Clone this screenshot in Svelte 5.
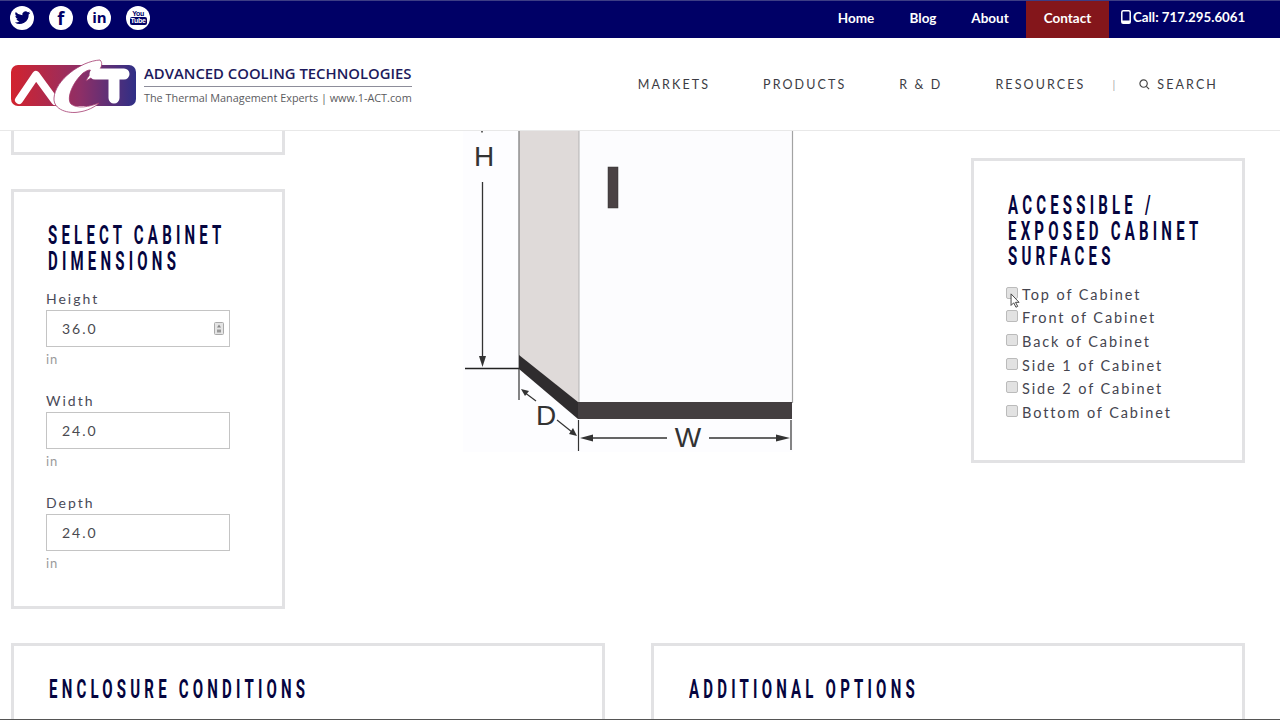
<script>
  const social = ['twitter', 'facebook', 'linkedin', 'youtube'];
  const topLinks = ['Home', 'Blog', 'About'];
  const mainLinks = ['MARKETS', 'PRODUCTS', 'R & D', 'RESOURCES'];
  const dimensions = [
    { label: 'Height', value: '36.0', spinner: true },
    { label: 'Width', value: '24.0' },
    { label: 'Depth', value: '24.0' }
  ];
  const surfaces = ['Top', 'Front', 'Back', 'Side 1', 'Side 2', 'Bottom'];
</script>

<div class="page">
  <div class="topbar">
    <div class="social">
      {#each social as name}
        <span class="round">
          {#if name === 'twitter'}
            <svg viewBox="0 0 24 24" width="17" height="17"><path fill="#000066" d="M23 5.400c-.8.4-1.700.6-2.600.7.900-.6 1.600-1.400 2-2.500-.9.500-1.800.9-2.900 1.100A4.500 4.500 0 0 0 11.800 8.800 12.800 12.800 0 0 1 2.500 4.100a4.500 4.500 0 0 0 1.400 6c-.7 0-1.400-.2-2-.6 0 2.200 1.500 4.100 3.600 4.500-.7.200-1.400.2-2 .1.600 1.800 2.300 3.100 4.200 3.100A9 9 0 0 1 1 19.100 12.800 12.800 0 0 0 20.700 7.700c.9-.6 1.700-1.400 2.300-2.300z"/></svg>
          {:else if name === 'facebook'}
            <span class="glyph fb">f</span>
          {:else if name === 'linkedin'}
            <span class="glyph in">in</span>
          {:else}
            <span class="yt"><span class="you">You</span><span class="tube">Tube</span></span>
          {/if}
        </span>
      {/each}
    </div>
    <nav class="toplinks">
      {#each topLinks as link}
        <span class="toplink">{link}</span>
      {/each}
      <span class="toplink contact">Contact</span>
      <span class="call">
        <svg viewBox="0 0 10 14" width="10" height="14"><rect x="0.800" y="0.800" width="8.400" height="12.400" rx="1.500" fill="none" stroke="#fff" stroke-width="1.500"/><rect x="0.800" y="10.500" width="8.400" height="2.700" fill="#fff"/></svg>
        Call: 717.295.6061
      </span>
    </nav>
  </div>

  <header class="header">
    <div class="logo">
      <svg class="mark" viewBox="0 0 126 56" width="126" height="56">
        <defs>
          <linearGradient id="act" x1="0" x2="1" y1="0" y2="0">
            <stop offset="0" stop-color="#d2232e"/>
            <stop offset="0.55" stop-color="#8f2f66"/>
            <stop offset="1" stop-color="#2f2f86"/>
          </linearGradient>
        </defs>
        <rect y="7" width="125" height="41" rx="7" fill="url(#act)"/>
        <path d="M8 42 L25 17 L44 43" fill="none" stroke="#fff" stroke-width="8" stroke-linecap="round" stroke-linejoin="round"/>
        <path d="M89 2 C70 3 44 22 43 40 C42 52 58 56 68 54 C76 53 84 49 88 45 C78 49 66 51 60 46 C55 40 62 24 72 15 C78 11 81 11 80 15 C78 18 76 20 75 23 C84 18 95 8 89 2 Z" fill="#fff" stroke="#a33a6e" stroke-width="0.800"/>
        <path d="M84 16 H113 M103 16 V40" fill="none" stroke="#fff" stroke-width="11" stroke-linecap="round"/>
      </svg>
      <div class="wordmark">
        <div class="company">ADVANCED COOLING TECHNOLOGIES</div>
        <div class="tagline">The Thermal Management Experts | www.1-ACT.com</div>
      </div>
    </div>
    <nav class="mainlinks">
      {#each mainLinks as link}
        <span>{link}</span>
      {/each}
      <span class="pipe">|</span>
      <span class="search">
        <svg viewBox="0 0 12 12" width="11" height="11"><circle cx="5" cy="5" r="4" fill="none" stroke="#444" stroke-width="1.300"/><path d="M8 8 L11 11" stroke="#444" stroke-width="1.300"/></svg>
        SEARCH
      </span>
    </nav>
  </header>

  <main class="main">
    <div class="upper">
      <div class="leftcol">
        <div class="card stub"></div>
        <section class="card dims">
          <h2><span>SELECT CABINET<br />DIMENSIONS</span></h2>
          {#each dimensions as d}
            <div class="field">
              <label for={d.label}>{d.label}</label>
              <div class="inputwrap">
                <input id={d.label} type="text" value={d.value} readonly />
                {#if d.spinner}
                  <svg class="spinner" viewBox="0 0 10 13" width="10" height="13">
                    <rect x="0.500" y="0.500" width="9" height="12" rx="1" fill="#e4e4e4" stroke="#aaa"/>
                    <polygon points="5,2.500 7,5.500 3,5.500" fill="#888"/>
                    <rect x="3" y="7.500" width="4" height="3" fill="#999"/>
                  </svg>
                {/if}
              </div>
              <div class="unit">in</div>
            </div>
          {/each}
        </section>
      </div>

      <div class="figure">
        <svg viewBox="448 131 360 340" width="360" height="340">
          <rect x="463" y="130" width="330" height="322" fill="#fdfdff"/>
          <polygon points="519,130 579,130 579,403 519,356" fill="#dfdad9"/>
          <rect x="579" y="130" width="213" height="273" fill="#fcfcfe"/>
          <path d="M579 130V403" stroke="#b3b3b3" stroke-width="1"/>
          <path d="M792.500 130V403" stroke="#a3a3a3" stroke-width="1.200"/>
          <path d="M519 130V368" stroke="#777" stroke-width="1.200"/>
          <rect x="608" y="167" width="10" height="41" fill="#4a4244" stroke="#333" stroke-width="0.500"/>
          <rect x="578" y="402" width="214" height="17" fill="#433e40"/>
          <polygon points="519,355 578,402 578,419 519,369" fill="#2f2c2e"/>

          <path d="M482 131v1.500" stroke="#333" stroke-width="1.500"/>
          <text x="484" y="166" class="dim">H</text>
          <path d="M482.500 182V362" stroke="#333" stroke-width="1.300"/>
          <polygon points="479,356 486,356 482.500,367" fill="#333"/>
          <path d="M465 368.500H519" stroke="#222" stroke-width="1.300"/>
          <path d="M519 368V400" stroke="#333" stroke-width="1.200"/>

          <path d="M524 392L536 401" stroke="#333" stroke-width="1.200"/>
          <polygon points="521,389 529,391 525,396" fill="#333"/>
          <text x="546" y="425" class="dim">D</text>
          <path d="M557 420L572 432" stroke="#333" stroke-width="1.200"/>
          <polygon points="577,436 569,434 573,428" fill="#333"/>

          <path d="M578.500 420V451" stroke="#333" stroke-width="1.200"/>
          <path d="M791 420V450" stroke="#333" stroke-width="1.200"/>
          <path d="M586 438H667M709 438H784" stroke="#333" stroke-width="1.300"/>
          <polygon points="580,438 593,434.500 593,441.500" fill="#333"/>
          <polygon points="790,438 776,434.500 776,441.500" fill="#333"/>
          <text x="688" y="447" class="dim">W</text>
        </svg>
      </div>

      <div class="rightcol">
        <section class="card surfaces">
          <h2><span>ACCESSIBLE /<br />EXPOSED CABINET<br />SURFACES</span></h2>
          <ul>
            {#each surfaces as s, i}
              <li>
                <input id={'s' + i} type="checkbox" />
                <label for={'s' + i}>{s} of Cabinet</label>
                {#if i === 0}
                  <svg class="cursor" viewBox="0 0 12 18" width="11" height="16"><path d="M1 1V14L4 11L6.500 16L8.500 15L6 10.500H10Z" fill="#fff" stroke="#333" stroke-width="1"/></svg>
                {/if}
              </li>
            {/each}
          </ul>
        </section>
      </div>
    </div>

    <div class="lower">
      <section class="card wide"><h2><span>ENCLOSURE CONDITIONS</span></h2></section>
      <section class="card wide"><h2><span>ADDITIONAL OPTIONS</span></h2></section>
    </div>
  </main>
</div>

<style>
  :global(body) {
    background: #fff;
  }

  .page {
    width: 1280px;
    height: 720px;
    overflow: hidden;
    font-family: Lato, "Liberation Sans", sans-serif;
    display: flex;
    flex-direction: column;
    border-bottom: 1px solid #555;
    box-sizing: border-box;
  }

  .topbar {
    height: 38px;
    flex: none;
    background: #000066;
    border-top: 1px solid #3d3d85;
    box-sizing: border-box;
    display: flex;
    justify-content: space-between;
    padding: 0 35px 0 10px;
  }

  .social {
    display: flex;
    gap: 14.700px;
    align-items: center;
    margin-top: -4px;
  }

  .round {
    width: 24px;
    height: 24px;
    border-radius: 50%;
    background: #fff;
    display: flex;
    align-items: center;
    justify-content: center;
    color: #000066;
    overflow: hidden;
  }

  .glyph {
    font-family: "Open Sans", sans-serif;
    font-weight: 700;
    line-height: 1;
  }

  .fb {
    font-size: 18px;
  }

  .in {
    font-size: 15px;
  }

  .yt {
    display: flex;
    flex-direction: column;
    align-items: center;
    font-family: "Liberation Sans", sans-serif;
    font-weight: 700;
  }

  .you {
    font-size: 7px;
    line-height: 7px;
    letter-spacing: -0.300px;
  }

  .tube {
    font-size: 7px;
    line-height: 8px;
    background: #000066;
    color: #fff;
    border-radius: 2px;
    padding: 0 1px;
    letter-spacing: -0.300px;
  }

  .toplinks {
    display: flex;
    align-items: center;
    color: #fff;
    font-size: 13.500px;
    font-weight: 700;
  }

  .toplink {
    width: 67px;
    text-align: center;
    padding-bottom: 3px;
  }

  .contact {
    width: 83px;
    height: 100%;
    margin-left: 2.500px;
    box-sizing: border-box;
    background: #84161b;
    display: flex;
    align-items: center;
    justify-content: center;
  }

  .call {
    width: 124px;
    margin-left: 12px;
    display: flex;
    align-items: center;
    gap: 2px;
    white-space: nowrap;
    padding-bottom: 5px;
    font-size: 13.300px;
  }

  .call svg {
    flex: none;
  }

  .header {
    height: 93px;
    flex: none;
    box-sizing: border-box;
    border-bottom: 1px solid #e8e8e8;
    display: flex;
    justify-content: space-between;
    align-items: center;
    padding: 0 62px 0 11px;
  }

  .logo {
    display: flex;
    align-items: center;
    gap: 7px;
    margin-top: 3px;
  }

  .wordmark {
    margin-top: -2px;
  }

  .company {
    font-family: "Open Sans", sans-serif;
    font-weight: 600;
    font-size: 14.850px;
    color: #1d1a5c;
    white-space: nowrap;
    line-height: 19px;
    border-bottom: 1px solid #8d8d9a;
    padding-bottom: 3px;
  }

  .tagline {
    font-family: "Open Sans", sans-serif;
    font-size: 10.850px;
    color: #5b5b60;
    line-height: 16px;
    padding-top: 3px;
    white-space: nowrap;
  }

  .mainlinks {
    display: flex;
    align-items: center;
    gap: 53px;
    color: #3c3c44;
    font-size: 12.500px;
    letter-spacing: 2.100px;
    padding-top: 1px;
  }

  .pipe {
    margin-left: -26px;
    margin-right: -31px;
    color: #aaa;
    font-size: 11px;
  }

  .search {
    display: flex;
    align-items: center;
    gap: 7px;
  }

  .main {
    flex: 1;
    min-height: 0;
    padding: 0 35px 0 11px;
    overflow: hidden;
  }

  .upper {
    display: grid;
    grid-template-columns: 274px 1fr 274px;
  }

  .leftcol {
    display: flex;
    flex-direction: column;
    gap: 34px;
  }

  .card {
    border: 3px solid #e2e2e4;
    box-sizing: border-box;
    background: #fff;
  }

  .stub {
    height: 24px;
    border-top: none;
  }

  h2 {
    margin: 0;
    font-family: Roboto, "Liberation Sans", sans-serif;
    font-weight: 700;
    font-size: 25px;
    line-height: 25.500px;
    letter-spacing: 7px;
    color: #05053f;
    white-space: nowrap;
  }

  h2 span {
    display: inline-block;
    transform: scaleX(0.6);
    transform-origin: 0 50%;
  }

  .dims {
    height: 420px;
    padding: 31px 0 0 32px;
  }

  .field {
    width: 184px;
    color: #4a4a58;
    height: 102px;
  }

  .dims h2 {
    margin: 0 0 15px 2px;
  }

  .field label {
    display: block;
    font-size: 14px;
    letter-spacing: 2px;
    line-height: 19px;
  }

  .inputwrap {
    position: relative;
    margin-top: 2px;
  }

  .inputwrap input {
    display: block;
    box-sizing: border-box;
    width: 184px;
    height: 37px;
    border: 1px solid #c4c4c4;
    padding: 0 15px;
    font-family: Lato, sans-serif;
    font-size: 14px;
    letter-spacing: 2px;
    color: #4a4a50;
    outline: none;
  }

  .spinner {
    position: absolute;
    right: 6px;
    top: 12px;
  }

  .unit {
    margin-top: 4px;
    font-size: 13px;
    color: #9a9a9a;
    letter-spacing: 1px;
  }

  .figure {
    display: flex;
    justify-content: center;
  }

  .dim {
    font-family: "Liberation Sans", sans-serif;
    font-size: 28px;
    fill: #333;
    text-anchor: middle;
  }

  .rightcol {
    padding-top: 27px;
  }

  .surfaces {
    height: 305px;
    padding: 32px 0 0 34px;
  }

  ul {
    list-style: none;
    margin: 13px 0 0 -2px;
    padding: 0;
  }

  li {
    position: relative;
    display: flex;
    align-items: center;
    gap: 4px;
    height: 23.600px;
    font-size: 14.500px;
    letter-spacing: 1.900px;
    color: #45454f;
  }

  li input {
    appearance: none;
    width: 12px;
    height: 12px;
    margin: -3px 0 0;
    background: #e2e2e2;
    border: 1px solid #bbb;
    border-radius: 2px;
    box-sizing: border-box;
  }

  .cursor {
    position: absolute;
    left: 4px;
    top: 10px;
  }

  .lower {
    display: grid;
    grid-template-columns: 594px 594px;
    gap: 46px;
    margin-top: 34px;
  }

  .wide {
    height: 120px;
    padding: 31px 0 0 35px;
  }
</style>
